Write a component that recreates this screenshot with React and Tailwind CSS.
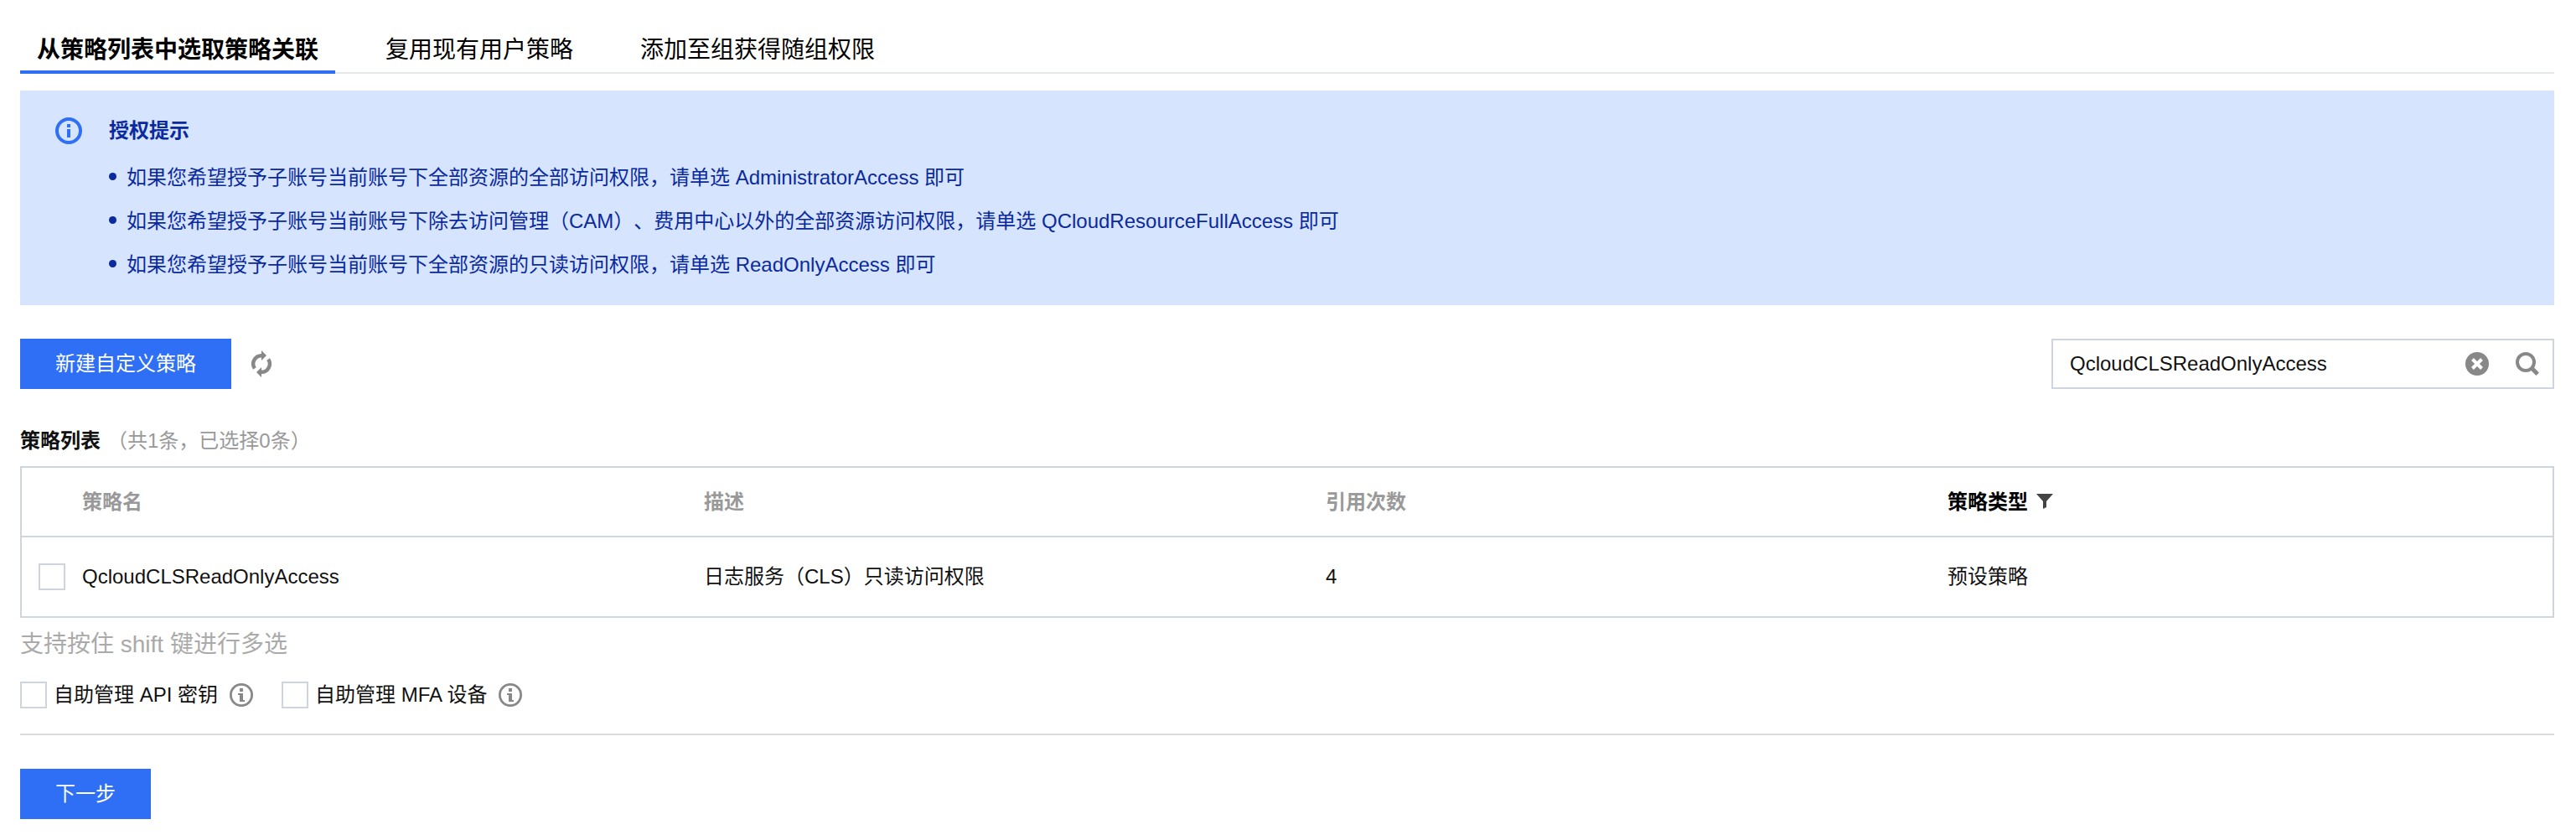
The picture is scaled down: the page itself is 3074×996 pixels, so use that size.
import { useState } from "react";

const TABS = [
  { key: "policy", label: "从策略列表中选取策略关联" },
  { key: "user", label: "复用现有用户策略" },
  { key: "group", label: "添加至组获得随组权限" },
];

const TIPS = [
  "如果您希望授予子账号当前账号下全部资源的全部访问权限，请单选 AdministratorAccess 即可",
  "如果您希望授予子账号当前账号下除去访问管理（CAM）、费用中心以外的全部资源访问权限，请单选 QCloudResourceFullAccess 即可",
  "如果您希望授予子账号当前账号下全部资源的只读访问权限，请单选 ReadOnlyAccess 即可",
];

const POLICIES = [
  {
    id: 1,
    name: "QcloudCLSReadOnlyAccess",
    desc: "日志服务（CLS）只读访问权限",
    count: 4,
    type: "预设策略",
  },
];

const OPTIONS = [
  { id: "api-key", label: "自助管理 API 密钥" },
  { id: "mfa", label: "自助管理 MFA 设备" },
];

const AlertIcon = () => (
  <svg viewBox="0 0 32 32" className="size-8 shrink-0" aria-hidden="true">
    <circle cx="16" cy="16" r="14" fill="none" stroke="#2e6ff6" strokeWidth="4" />
    <path d="M14 8h4v4h-4zM14 14h4v10h-4z" fill="#2e6ff6" />
  </svg>
);

const InfoIcon = () => (
  <svg viewBox="0 0 28 28" className="size-7 shrink-0" aria-hidden="true">
    <circle cx="14" cy="14" r="12.6" fill="none" stroke="#888" strokeWidth="2.8" />
    <path d="M12 6h4v4h-4zM10 12h6v8h2v2h-6v-8h-2z" fill="#888" />
  </svg>
);

const RefreshIcon = () => (
  <svg viewBox="0 0 24 32" className="h-8 w-6" aria-hidden="true">
    <path
      d="M3.900 21.500A9.800 9.800 0 0 1 12.500 6.200M20.100 10.500A9.800 9.800 0 0 1 11.500 25.800"
      fill="none"
      stroke="#888"
      strokeWidth="4.400"
    />
    <path d="M12 0l6 6-6 6zM12 20v12l-6-6z" fill="#888" />
  </svg>
);

const ClearIcon = () => (
  <svg viewBox="0 0 28 28" className="size-7" aria-hidden="true">
    <circle cx="14" cy="14" r="14" fill="#888" />
    <path d="M8.5 8.5l11 11M19.5 8.5l-11 11" stroke="#fff" strokeWidth="4" />
  </svg>
);

const SearchIcon = () => (
  <svg viewBox="0 0 28 28" className="size-7" aria-hidden="true">
    <circle cx="12" cy="12" r="10" fill="none" stroke="#888" strokeWidth="4" />
    <path d="M18.5 18.5l7.700 7.700" stroke="#888" strokeWidth="5" />
  </svg>
);

const FilterIcon = () => (
  <svg viewBox="0 0 20 20" className="size-5" aria-hidden="true">
    <path d="M0 0h20l-8 9v7l-4 2V9z" fill="#444" />
  </svg>
);

const Checkbox = (props) => (
  <input
    type="checkbox"
    className="block size-8 shrink-0 appearance-none border-2 border-[#cfd5de] bg-white checked:bg-[#2e6ff6]"
    {...props}
  />
);

const App = () => {
  const [tab, setTab] = useState("policy");
  const [keyword, setKeyword] = useState("QcloudCLSReadOnlyAccess");

  return (
    <main className="bg-white pt-7 pr-[26px] pb-4 pl-6 font-['Liberation_Sans','Noto_Sans_CJK_SC',sans-serif] text-2xl leading-9 text-[#111] [text-spacing-trim:space-all]">
      <div role="tablist" className="flex gap-10 border-b-2 border-[#e5e8ed] text-[28px] text-black">
        {TABS.map((item) => (
          <button
            key={item.key}
            type="button"
            role="tab"
            aria-selected={tab === item.key}
            onClick={() => setTab(item.key)}
            className={
              tab === item.key
                ? "-mb-0.5 h-[60px] border-b-4 border-[#2e6ff6] px-5 pt-2 font-bold"
                : "-mb-0.5 h-[60px] border-b-4 border-transparent px-5 pt-2"
            }
          >
            {item.label}
          </button>
        ))}
      </div>

      <section className="mt-5 flex gap-8 bg-[#d6e4fd] px-[42px] pt-8 pb-[22px] text-[#0a2a9e]">
        <AlertIcon />
        <div>
          <h2 className="leading-8 font-bold">授权提示</h2>
          <ul className="mt-[14px]">
            {TIPS.map((tip) => (
              <li key={tip} className="flex items-center gap-3 leading-[52px]">
                <span className="mb-1 size-[9px] shrink-0 rounded-full bg-[#0a2a9e]" />
                {tip}
              </li>
            ))}
          </ul>
        </div>
      </section>

      <div className="mt-10 flex items-center justify-between">
        <div className="flex items-center gap-6">
          <button type="button" className="h-[60px] bg-[#2e6ff6] px-[42px] text-white">
            新建自定义策略
          </button>
          <button type="button" aria-label="刷新">
            <RefreshIcon />
          </button>
        </div>
        <div className="flex h-[60px] w-[600px] items-center border-2 border-[#cfd5de] pr-4 pl-5">
          <input
            type="text"
            aria-label="搜索策略"
            value={keyword}
            onChange={(e) => setKeyword(e.target.value)}
            className="min-w-0 flex-1 outline-none"
          />
          <button type="button" aria-label="清空" onClick={() => setKeyword("")}>
            <ClearIcon />
          </button>
          <button type="button" aria-label="搜索" className="ml-8">
            <SearchIcon />
          </button>
        </div>
      </div>

      <div className="mt-11 flex gap-2">
        <h3 className="font-bold">策略列表</h3>
        <span className="text-[#999]">（共1条，已选择0条）</span>
      </div>

      <div className="mt-3 border-2 border-[#cfd5de]">
        <table className="w-full table-fixed text-left">
          <thead>
            <tr className="h-[82px] border-b-2 border-[#cfd5de] text-[#999]">
              <td className="w-[52px]"></td>
              <th className="px-5 font-bold">策略名</th>
              <th className="px-5 font-bold">描述</th>
              <th className="px-5 font-bold">引用次数</th>
              <th className="px-5 font-bold text-black">
                <div className="flex items-center gap-[10px]">
                  策略类型
                  <button type="button" aria-label="筛选策略类型">
                    <FilterIcon />
                  </button>
                </div>
              </th>
            </tr>
          </thead>
          <tbody>
            {POLICIES.map((policy) => (
              <tr key={policy.id} className="h-[95px]">
                <td className="pl-5">
                  <Checkbox aria-label={policy.name} />
                </td>
                <td className="px-5">{policy.name}</td>
                <td className="px-5">{policy.desc}</td>
                <td className="px-5">{policy.count}</td>
                <td className="px-5">{policy.type}</td>
              </tr>
            ))}
          </tbody>
        </table>
      </div>

      <p className="mt-3 text-[28px] leading-10 text-[#aaa]">支持按住 shift 键进行多选</p>

      <div className="mt-[22px] flex gap-[34px]">
        {OPTIONS.map((option) => (
          <div key={option.id} className="flex items-center gap-[14px]">
            <div className="flex items-center gap-2">
              <Checkbox id={option.id} />
              <label htmlFor={option.id}>{option.label}</label>
            </div>
            <InfoIcon />
          </div>
        ))}
      </div>

      <hr className="mt-7 border-t-2 border-[#ddd]" />

      <button type="button" className="mt-10 h-[60px] bg-[#2e6ff6] px-[42px] text-white">
        下一步
      </button>
    </main>
  );
};

export default App;
